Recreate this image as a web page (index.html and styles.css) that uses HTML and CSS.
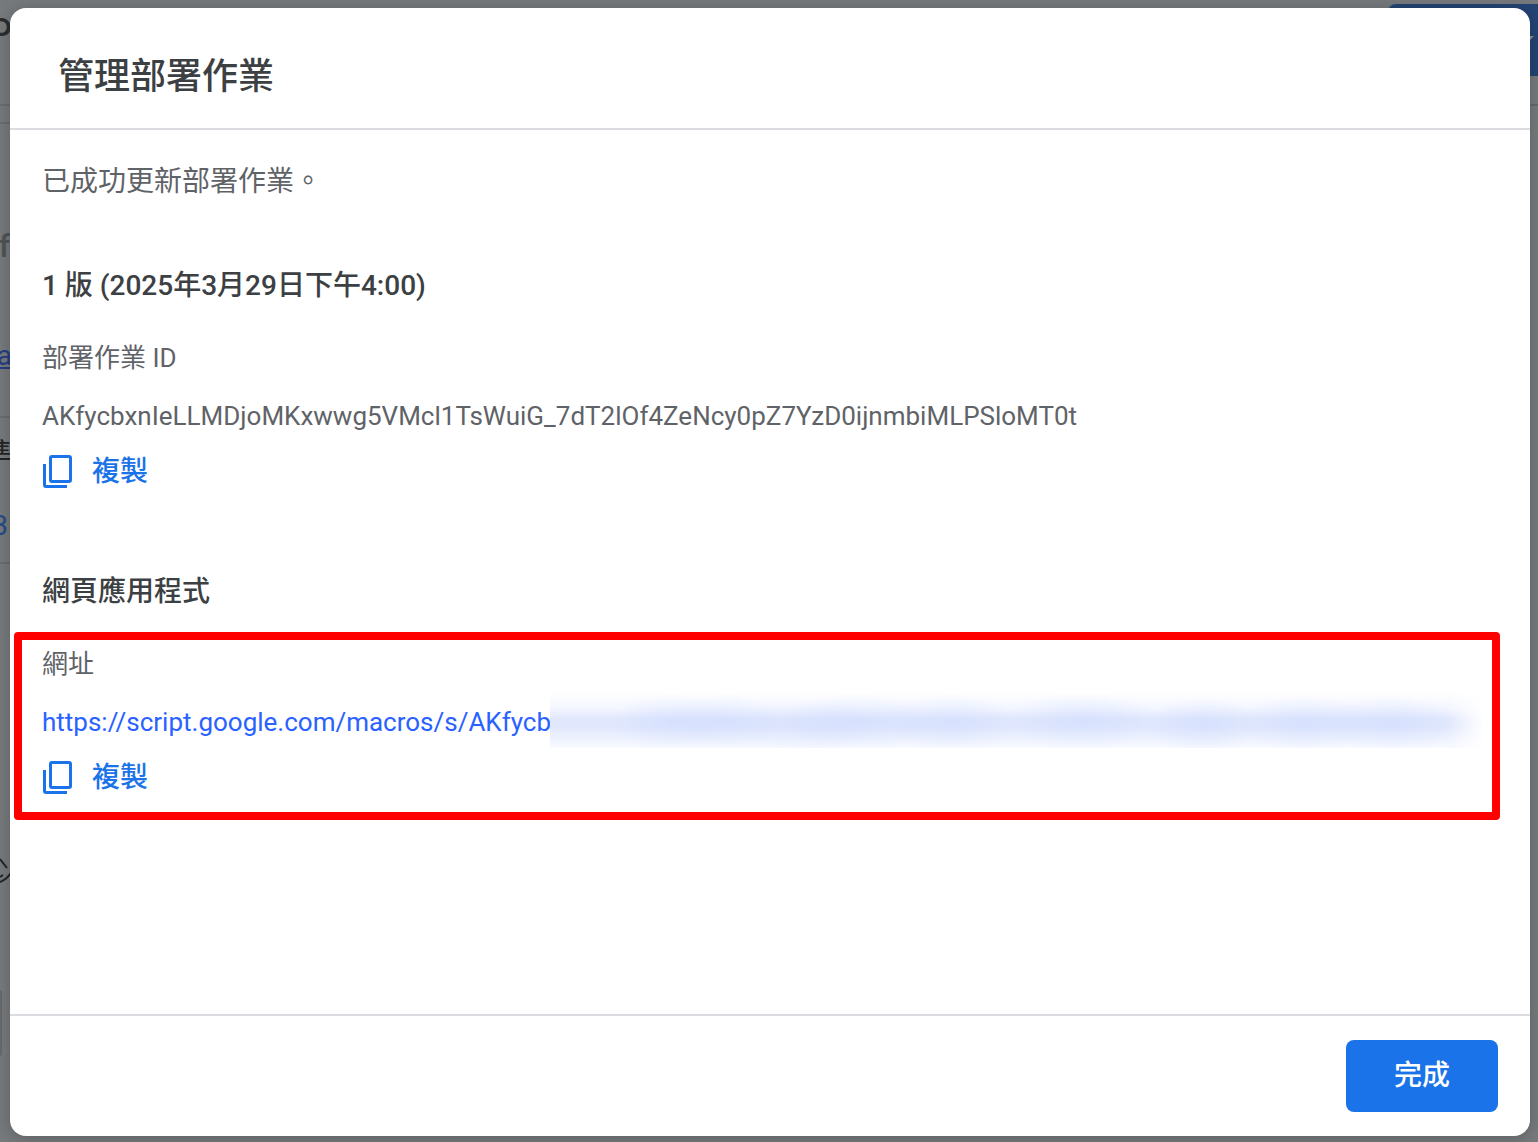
FILE: index.html
```html
<!DOCTYPE html>
<html lang="zh-Hant">
<head>
  <meta charset="UTF-8" />
  <title>管理部署作業</title>
  <meta name="viewport" content="width=device-width, initial-scale=1.0" />
  <link rel="stylesheet" href="styles.css">
</head>
<body>
  <!-- 對話框後方的編輯器畫面 -->
  <div class="editor" aria-hidden="true">
    <div class="editor-side">
      <div class="side-bar side-title">P</div>
      <div class="side-bar side-tabs"></div>
      <div class="side-item side-name">.f</div>
      <div class="side-item side-link">a</div>
      <div class="side-item side-tag">準</div>
      <div class="side-item side-count">3</div>
      <svg class="side-icon" width="20" height="28" viewBox="0 0 20 28" fill="none" stroke="#222426" stroke-width="2">
        <path d="M8 3 L15 12 M8 21 L11 19 M8 26 Q16 23 20 15" />
      </svg>
      <div class="side-box"></div>
    </div>
    <div class="editor-main">
      <div class="editor-deploy"><span class="deploy-arrow"></span></div>
      <div class="editor-line"></div>
    </div>
  </div>

  <div class="dialog" role="dialog" aria-labelledby="dialogTitle">
    <header class="dialog-header">
      <h1 id="dialogTitle">管理部署作業</h1>
    </header>

    <main class="dialog-body">
      <p class="message">已成功更新部署作業。</p>

      <section class="block">
        <h2>1 版 (2025年3月29日下午4:00)</h2>
        <div class="field">
          <p class="label">部署作業 ID</p>
          <p class="value">AKfycbxnIeLLMDjoMKxwwg5VMcl1TsWuiG_7dT2lOf4ZeNcy0pZ7YzD0ijnmbiMLPSloMT0t</p>
          <button class="copy-btn" type="button">
            <svg class="copy-icon" width="32" height="36" viewBox="0 0 32 36" fill="none" stroke="currentColor" stroke-width="3">
              <rect x="8.5" y="2.5" width="20" height="25" rx="1.5" />
              <path d="M2.5 10 V31 Q2.5 32.5 4 32.5 H25" />
            </svg>
            <span>複製</span>
          </button>
        </div>
      </section>

      <section class="block">
        <h2>網頁應用程式</h2>
        <div class="field marked">
          <p class="label">網址</p>
          <p class="value">
            <a href="#">https://script.google.com/macros/s/AKfycb</a>
            <span class="smudge"></span>
          </p>
          <button class="copy-btn" type="button">
            <svg class="copy-icon" width="32" height="36" viewBox="0 0 32 36" fill="none" stroke="currentColor" stroke-width="3">
              <rect x="8.5" y="2.5" width="20" height="25" rx="1.5" />
              <path d="M2.5 10 V31 Q2.5 32.5 4 32.5 H25" />
            </svg>
            <span>複製</span>
          </button>
        </div>
      </section>
    </main>

    <footer class="dialog-footer">
      <button class="done-btn" type="button">完成</button>
    </footer>
  </div>
</body>
</html>
```
FILE: styles.css
```css
* {
  box-sizing: border-box;
}

body {
  display: flex;
  min-height: 100vh;
  margin: 0;
  padding: 8px 8px 6px 10px;
  background-color: #777a7c;
  font-family: Roboto, "Noto Sans CJK TC", sans-serif;
  color: #3c4043;
}

h1,
h2,
p {
  margin: 0;
}

/* 後方畫面 */
.editor {
  position: absolute;
  inset: 0;
  display: flex;
  overflow: hidden;
}

.editor-side {
  width: 12px;
  font-size: 28px;
  line-height: 36px;
  color: #505456;
}

.side-bar,
.side-item {
  display: flex;
  justify-content: flex-end;
  border-bottom: 2px solid #6a6c6e;
}

.side-title {
  height: 106px;
  padding-top: 16px;
  font-size: 40px;
  color: #2a2d2f;
}

.side-tabs {
  height: 18px;
}

.side-name {
  padding: 104px 2px 0 0;
  border-bottom: 0;
  font-size: 32px;
  font-weight: 500;
}

.side-link {
  height: 154px;
  padding-top: 74px;
  color: #253e82;
  text-decoration: underline;
}

.side-tag {
  padding-top: 18px;
  border-bottom: 0;
  color: #222426;
}

.side-count {
  height: 92px;
  padding: 36px 4px 0 0;
  color: #264b86;
}

.side-icon {
  display: block;
  margin: 292px 0 106px -8px;
}

.side-box {
  width: 2px;
  height: 66px;
  border-radius: 0 2px 2px 0;
  background-color: #68696b;
}

.editor-main {
  flex: 1;
  padding-top: 4px;
}

.editor-deploy {
  display: flex;
  justify-content: flex-end;
  width: 150px;
  height: 72px;
  margin-left: auto;
  padding-top: 32px;
  border-radius: 8px 0 0 8px;
  background-color: #244475;
}

.deploy-arrow {
  width: 14px;
  height: 7px;
  margin-right: 4px;
  background-color: #8f8f8c;
  clip-path: polygon(0 0, 100% 0, 50% 100%);
}

.editor-line {
  height: 30px;
  border-bottom: 2px solid #66696b;
}

/* 對話框 */
.dialog {
  position: relative;
  flex: 1;
  display: flex;
  flex-direction: column;
  border-radius: 16px;
  background-color: #fff;
  box-shadow: 0 2px 16px rgba(0, 0, 0, 0.24);
}

.dialog-header {
  padding: 45px 48px 27px;
  border-bottom: 2px solid #dadce0;
}

h1 {
  font-size: 36px;
  font-weight: 500;
  line-height: 48px;
}

.dialog-body {
  flex: 1;
  padding: 32px;
}

.message {
  font-size: 28px;
  line-height: 40px;
  color: #5f6368;
}

.block {
  margin-top: 64px;
}

.block + .block {
  margin-top: 80px;
}

h2 {
  font-size: 28px;
  font-weight: 500;
  line-height: 40px;
}

.field {
  position: relative;
  margin-top: 32px;
}

.label,
.value {
  font-size: 26px;
  line-height: 40px;
  color: #5f6368;
}

.value {
  position: relative;
  margin: 18px 0 16px;
}

.value a {
  color: #2962ff;
  text-decoration: none;
}

/* 網址後半段的遮蔽 */
.smudge {
  position: absolute;
  top: -12px;
  right: 14px;
  left: 508px;
  height: 58px;
  background:
    radial-gradient(ellipse 60px 28px at 13% 55%, rgba(200, 214, 255, 0.4), transparent),
    radial-gradient(ellipse 60px 28px at 19% 55%, rgba(200, 214, 255, 0.4), transparent),
    radial-gradient(ellipse 70px 28px at 27% 62%, rgba(205, 217, 255, 0.3), transparent),
    radial-gradient(ellipse 80px 28px at 33% 55%, rgba(200, 214, 255, 0.4), transparent),
    radial-gradient(ellipse 70px 28px at 43% 56%, rgba(200, 214, 255, 0.4), transparent),
    radial-gradient(ellipse 80px 28px at 57% 53%, rgba(200, 214, 255, 0.4), transparent),
    radial-gradient(ellipse 60px 28px at 70% 60%, rgba(200, 214, 255, 0.4), transparent),
    radial-gradient(ellipse 70px 28px at 81% 57%, rgba(200, 214, 255, 0.4), transparent),
    radial-gradient(ellipse 70px 28px at 90% 57%, rgba(200, 214, 255, 0.4), transparent),
    linear-gradient(#fff 4%, #f3f6ff 32%, #e1e8fd 50%, #e1e8fd 62%, #f8faff);
  -webkit-mask-image: linear-gradient(to right, #000 96%, transparent);
  mask-image: linear-gradient(to right, #000 96%, transparent);
}

/* 紅色標示框 */
.marked::after {
  content: "";
  position: absolute;
  inset: -12px -2px -22px -28px;
  border: 8px solid #f00;
  border-radius: 4px;
  pointer-events: none;
}

.copy-btn {
  display: flex;
  align-items: center;
  gap: 18px;
  padding: 0;
  border: 0;
  background: none;
  font: 500 28px/40px Roboto, "Noto Sans CJK TC", sans-serif;
  color: #1a73e8;
  cursor: pointer;
}

.dialog-footer {
  display: flex;
  justify-content: flex-end;
  padding: 24px 32px;
  border-top: 2px solid #dadce0;
}

.done-btn {
  padding: 16px 48px;
  border: 0;
  border-radius: 8px;
  background-color: #1a73e8;
  font: 500 28px/40px Roboto, "Noto Sans CJK TC", sans-serif;
  color: #fff;
  cursor: pointer;
}
```
